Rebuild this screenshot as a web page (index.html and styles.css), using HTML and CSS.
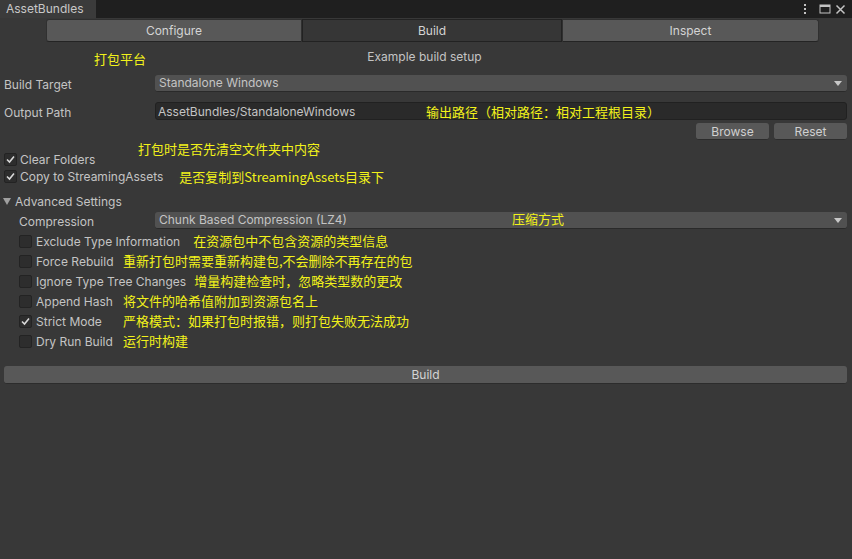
FILE: index.html
```html
<!DOCTYPE html>
<html>
<head>
<meta charset="utf-8">
<link rel="stylesheet" href="styles.css">
</head>
<body>
<div class="window">
  <div class="titlebar">
    <div class="tab">AssetBundles</div>
    <div class="title-icons">
      <svg class="kebab" width="4" height="12" viewBox="0 0 4 12"><rect x="1" y="1" width="2" height="2" fill="#c4c4c4"/><rect x="1" y="5" width="2" height="2" fill="#c4c4c4"/><rect x="1" y="9" width="2" height="2" fill="#c4c4c4"/></svg>
      <svg width="12" height="12" viewBox="0 0 12 12"><rect x="1" y="2" width="10" height="8" fill="none" stroke="#c4c4c4" stroke-width="1"/><rect x="1" y="2" width="10" height="2" fill="#c4c4c4"/></svg>
      <svg width="11" height="11" viewBox="0 0 11 11"><path d="M1.5 1.5 L9.5 9.5 M9.5 1.5 L1.5 9.5" stroke="#c4c4c4" stroke-width="1.5"/></svg>
    </div>
  </div>

  <div class="toolbar">
    <div class="tb-btn tb-first">Configure</div>
    <div class="tb-btn tb-mid tb-selected">Build</div>
    <div class="tb-btn tb-last">Inspect</div>
  </div>

  <div class="header">
    <div class="header-text">Example build setup</div>
    <span class="note note-platform">打包平台</span>
  </div>

  <div class="field-row">
    <div class="label">Build Target</div>
    <div class="popup">
      <span>Standalone Windows</span>
      <svg class="arrow" width="8" height="5" viewBox="0 0 8 5"><path d="M0 0 H8 L4 5 Z" fill="#c8c8c8"/></svg>
    </div>
  </div>

  <div class="field-row row-output">
    <div class="label">Output Path</div>
    <div class="textfield">
      <span>AssetBundles/StandaloneWindows</span>
      <span class="note note-output">输出路径（相对路径：相对工程根目录）</span>
    </div>
  </div>

  <div class="button-row">
    <div class="btn">Browse</div>
    <div class="btn">Reset</div>
  </div>

  <div class="check-row row-clear">
    <span class="note note-clear">打包时是否先清空文件夹中内容</span>
    <div class="checkbox checked"><svg width="11" height="11" viewBox="0 0 11 11"><path d="M2 5.5 L4.5 8 L9 2.5" fill="none" stroke="#d8d8d8" stroke-width="1.6"/></svg></div>
    <span class="check-label">Clear Folders</span>
  </div>
  <div class="check-row">
    <div class="checkbox checked"><svg width="11" height="11" viewBox="0 0 11 11"><path d="M2 5.5 L4.5 8 L9 2.5" fill="none" stroke="#d8d8d8" stroke-width="1.6"/></svg></div>
    <span class="check-label">Copy to StreamingAssets</span>
    <span class="note note-copy">是否复制到StreamingAssets目录下</span>
  </div>

  <div class="foldout">
    <svg width="8" height="7" viewBox="0 0 8 7"><path d="M0 0 H8 L4 7 Z" fill="#a0a0a0"/></svg>
    <span>Advanced Settings</span>
  </div>

  <div class="field-row row-compression">
    <div class="label label-indent">Compression</div>
    <div class="popup">
      <span>Chunk Based Compression (LZ4)</span>
      <span class="note note-compress">压缩方式</span>
      <svg class="arrow" width="8" height="5" viewBox="0 0 8 5"><path d="M0 0 H8 L4 5 Z" fill="#c8c8c8"/></svg>
    </div>
  </div>

  <div class="adv-list">
    <div class="check-row adv">
      <div class="checkbox"></div>
      <span class="check-label adv-label">Exclude Type Information</span>
      <span class="note note-wide">在资源包中不包含资源的类型信息</span>
    </div>
    <div class="check-row adv">
      <div class="checkbox"></div>
      <span class="check-label adv-label">Force Rebuild</span>
      <span class="note">重新打包时需要重新构建包,不会删除不再存在的包</span>
    </div>
    <div class="check-row adv">
      <div class="checkbox"></div>
      <span class="check-label adv-label">Ignore Type Tree Changes</span>
      <span class="note">增量构建检查时，忽略类型数的更改</span>
    </div>
    <div class="check-row adv">
      <div class="checkbox"></div>
      <span class="check-label adv-label">Append Hash</span>
      <span class="note">将文件的哈希值附加到资源包名上</span>
    </div>
    <div class="check-row adv">
      <div class="checkbox checked"><svg width="11" height="11" viewBox="0 0 11 11"><path d="M2 5.5 L4.5 8 L9 2.5" fill="none" stroke="#d8d8d8" stroke-width="1.6"/></svg></div>
      <span class="check-label adv-label">Strict Mode</span>
      <span class="note">严格模式：如果打包时报错，则打包失败无法成功</span>
    </div>
    <div class="check-row adv">
      <div class="checkbox"></div>
      <span class="check-label adv-label">Dry Run Build</span>
      <span class="note">运行时构建</span>
    </div>
  </div>

  <div class="build-row">
    <div class="btn btn-build">Build</div>
  </div>
</div>
</body>
</html>
```

FILE: styles.css
```css
html, body {
  margin: 0;
  padding: 0;
}
body {
  width: 852px;
  height: 559px;
  overflow: hidden;
  background: #383838;
  font-family: Inter, "Noto Sans", "Liberation Sans", sans-serif;
  font-size: 12px;
  color: #c4c4c4;
}
.window {
  display: flex;
  flex-direction: column;
}

/* title bar */
.titlebar {
  height: 18px;
  background: #1f1f1f;
  display: flex;
  justify-content: space-between;
  align-items: stretch;
}
.tab {
  width: 96px;
  background: #3b3b3b;
  padding-left: 6px;
  box-sizing: border-box;
  line-height: 17px;
  color: #c8c8c8;
}
.title-icons {
  display: flex;
  align-items: center;
  gap: 4px;
  padding-right: 6px;
}
.kebab {
  margin-right: 8px;
}

/* toolbar */
.toolbar {
  display: flex;
  margin: 1px 0 0 46px;
  height: 23px;
}
.tb-btn {
  width: 256px;
  box-sizing: border-box;
  background: #585858;
  border: 1px solid #303030;
  border-bottom-color: #242424;
  text-align: center;
  line-height: 21px;
  color: #d4d4d4;
  font-size: 12px;
}
.tb-first { border-radius: 3px 0 0 3px; }
.tb-mid { width: 260px; border-left: none; border-right: none; }
.tb-last { width: 257px; border-radius: 0 3px 3px 0; }
.tb-selected {
  background: #363636;
  border: 1px solid #222222;
}

/* header */
.header {
  position: relative;
  height: 32px;
}
.header-text {
  text-align: center;
  margin-top: 8px;
  line-height: 14px;
  padding-right: 3px;
}

/* annotations */
.note {
  font-family: "Noto Sans CJK SC", sans-serif;
  font-size: 13px;
  line-height: 18px;
  color: #f2f21a;
  white-space: nowrap;
}
.note-platform {
  position: absolute;
  left: 94px;
  top: 8px;
}
.note-output {
  position: absolute;
  left: 270px;
  top: 0;
}
.note-clear {
  position: absolute;
  left: 138px;
  top: -11px;
}
.note-compress {
  position: absolute;
  left: 357px;
  top: -2px;
}
.note-copy {
  margin-left: 16px;
}

/* field rows */
.field-row {
  display: flex;
  align-items: center;
  height: 18px;
  padding: 0 5px 0 4px;
}
.row-output { margin-top: 10px; }
.label {
  width: 151px;
  flex: none;
  padding-top: 2px;
}
.label-indent {
  width: 136px;
  padding-left: 15px;
}
.popup {
  position: relative;
  flex: 1;
  height: 17px;
  background: #515151;
  border-radius: 3px;
  border-bottom: 1px solid #2a2a2a;
  display: flex;
  align-items: center;
  padding-left: 4px;
  box-sizing: border-box;
}
.arrow {
  position: absolute;
  right: 5px;
  top: 6px;
}
.textfield {
  position: relative;
  flex: 1;
  height: 18px;
  background: #2a2a2a;
  border: 1px solid #212121;
  border-radius: 3px;
  display: flex;
  align-items: center;
  padding-left: 2px;
  box-sizing: border-box;
}

/* buttons */
.button-row {
  display: flex;
  justify-content: flex-end;
  gap: 5px;
  padding-right: 5px;
  margin-top: 3px;
  height: 18px;
}
.btn {
  width: 73px;
  height: 17px;
  box-sizing: border-box;
  background: #585858;
  border-radius: 3px;
  border-bottom: 1px solid #2c2c2c;
  text-align: center;
  line-height: 17px;
  color: #d0d0d0;
}

/* checkboxes */
.check-row {
  position: relative;
  display: flex;
  align-items: center;
  height: 17px;
  padding-left: 4px;
}
.row-clear { margin-top: 10px; }
.checkbox {
  width: 13px;
  height: 13px;
  box-sizing: border-box;
  flex: none;
  background: #2d2d2d;
  border: 1px solid #232323;
  border-radius: 2px;
  display: flex;
  align-items: center;
  justify-content: center;
}
.check-label {
  margin-left: 3px;
}

/* foldout */
.foldout {
  display: flex;
  align-items: center;
  gap: 4px;
  height: 18px;
  margin-top: 7px;
  padding-left: 3px;
}
.row-compression { margin-top: 1px; }

.adv-list {
  margin-top: 2px;
  display: flex;
  flex-direction: column;
}
.check-row.adv {
  height: 20px;
  padding-left: 19px;
}
.adv-label {
  margin-left: 4px;
  min-width: 79px;
}
.adv .note {
  margin-left: 8px;
}
.adv .note-wide {
  margin-left: 13px;
}

/* build */
.build-row {
  margin-top: 15px;
  padding: 0 5px 0 4px;
}
.btn-build {
  width: auto;
  height: 18px;
  line-height: 17px;
  color: #d4d4d4;
}
```
